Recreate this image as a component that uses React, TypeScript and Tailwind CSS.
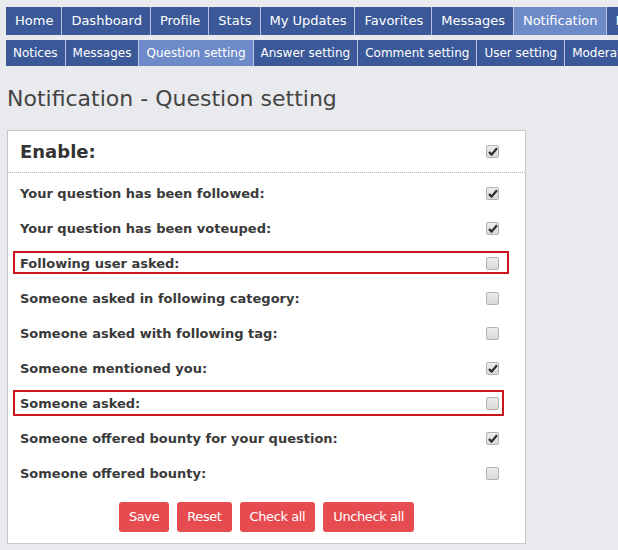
import React from 'react';

const topTabs = ['Home', 'Dashboard', 'Profile', 'Stats', 'My Updates', 'Favorites', 'Messages', 'Notification', 'Moderation'];
const subTabs = ['Notices', 'Messages', 'Question setting', 'Answer setting', 'Comment setting', 'User setting', 'Moderation setting'];

const rows = [
  { label: 'Your question has been followed:', checked: true },
  { label: 'Your question has been voteuped:', checked: true },
  { label: 'Following user asked:', checked: false, mark: 'a' },
  { label: 'Someone asked in following category:', checked: false },
  { label: 'Someone asked with following tag:', checked: false },
  { label: 'Someone mentioned you:', checked: true },
  { label: 'Someone asked:', checked: false, mark: 'b' },
  { label: 'Someone offered bounty for your question:', checked: true },
  { label: 'Someone offered bounty:', checked: false },
];

const Box = ({ checked }: { checked: boolean }) => (
  <span className="flex h-[13px] w-[13px] items-center justify-center rounded-[2px] border border-[#b3b3b3] bg-gradient-to-b from-[#ececec] to-[#d9d9d9]">
    {checked && (
      <svg width="10" height="9" viewBox="0 0 10 9">
        <path d="M1 5 L3.6 7.6 L9 1.2" fill="none" stroke="#2b2b2b" strokeWidth="2.2" strokeLinejoin="round" />
      </svg>
    )}
  </span>
);

export default function App() {
  return (
    <div className="min-h-[550px] w-[618px] overflow-hidden bg-[#e9eaed] pl-[6px] pt-[7px] font-['DejaVu_Sans',Verdana,sans-serif] text-[#333]">
      {/* top tabs */}
      <div className="flex h-[28px] whitespace-nowrap">
        {topTabs.map((t, i) => (
          <div
            key={t}
            className={`flex items-center pl-[9px] pr-[8px] text-[13px] text-white ${i > 0 ? 'border-l border-[#b7c3de]' : ''} ${
              t === 'Notification' ? 'bg-[#6d8bc8]' : 'bg-[#3b5998]'
            }`}
          >
            {t}
          </div>
        ))}
      </div>

      {/* sub tabs */}
      <div className="mt-[5px] flex h-[26px] whitespace-nowrap">
        {subTabs.map((t, i) => (
          <div
            key={t}
            className={`flex items-center px-[7px] text-[12px] text-white ${i > 0 ? 'border-l border-[#b7c3de]' : ''} ${
              t === 'Question setting' ? 'bg-[#6d8bc8]' : 'bg-[#3b5998]'
            }`}
          >
            {t}
          </div>
        ))}
      </div>

      <h1 className="mt-[18px] pl-[1px] text-[22px] leading-[30px] text-[#444]">Notification - Question setting</h1>

      {/* settings panel */}
      <div className="ml-[1px] mt-[16px] w-[519px] border border-[#c8c8c8] bg-white">
        <div className="flex h-[42px] items-center justify-between border-b border-dotted border-[#b5b5b5] pl-[12px] pr-[26px]">
          <span className="text-[18px] font-bold text-[#333]">Enable:</span>
          <Box checked />
        </div>

        <div className="pt-[3px]">
          {rows.map((r) => (
            <div key={r.label} className="relative flex h-[35px] items-center justify-between pl-[12px] pr-[26px]">
              <span className="text-[13px] font-bold text-[#3a3a3a]">{r.label}</span>
              <Box checked={r.checked} />
              {r.mark === 'a' && (
                <div className="pointer-events-none absolute left-[5px] top-[5px] h-[23px] w-[496px] border-2 border-[#c8161d]" />
              )}
              {r.mark === 'b' && (
                <div className="pointer-events-none absolute left-[5px] top-[4px] h-[26px] w-[491px] border-2 border-[#c8161d]" />
              )}
            </div>
          ))}
        </div>

        <div className="mb-[11px] mt-[11px] flex justify-center gap-[8px]">
          {['Save', 'Reset', 'Check all', 'Uncheck all'].map((b) => (
            <button
              key={b}
              className="h-[30px] rounded-[3px] bg-[#e64b4f] px-[10px] font-['DejaVu_Sans',Verdana,sans-serif] text-[13px] tracking-[-0.4px] text-white"
            >
              {b}
            </button>
          ))}
        </div>
      </div>
    </div>
  );
}
